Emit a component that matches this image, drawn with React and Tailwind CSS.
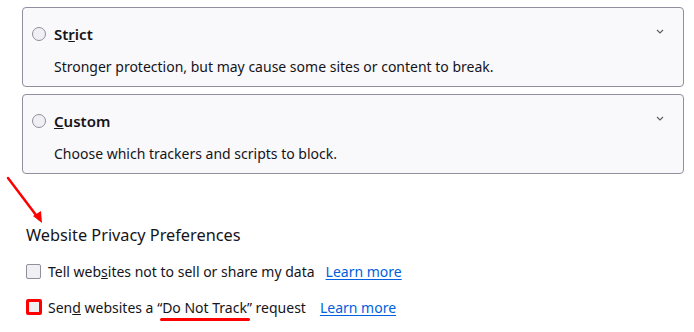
import React from 'react';

const font = { fontFamily: '"Noto Sans", "Liberation Sans", sans-serif' };

const Chevron = () => (
  <svg width="8" height="5" viewBox="0 0 8 5" className="text-[#5b5b66]">
    <path d="M1 1 L4 4 L7 1" fill="none" stroke="currentColor" strokeWidth="1.1" />
  </svg>
);

// Blocking level card (Strict / Custom)
const LevelCard = ({ title, description }) => (
  <div className="mx-[22px] w-[662px] rounded-[4px] border border-[#8f8f9d] bg-[#f9f9fb] pt-[16px] pb-[9px] pl-[9px] pr-[19px]">
    <div className="flex h-[20px] items-center">
      <span className="h-[14px] w-[14px] shrink-0 rounded-full border border-[#8f8f9d] bg-[#f0f0f4]" />
      <span className="ml-[8px] text-[15px] font-semibold text-[#15141a]">{title}</span>
      <span className="mb-[6px] ml-auto flex items-center">
        <Chevron />
      </span>
    </div>
    <p className="mt-[13px] h-[20px] pl-[22px] text-[14px] leading-[20px] text-[#15141a]">{description}</p>
  </div>
);

const LearnMore = () => (
  <a href="#" className="text-[14px] text-[#0061e0] underline underline-offset-2">
    Learn more
  </a>
);

export default function App() {
  return (
    <div className="relative h-[332px] w-[694px] overflow-hidden bg-white" style={font}>
      <div className="flex flex-col gap-[7px] pt-[7px]">
        <LevelCard
          title={<>St<u>r</u>ict</>}
          description="Stronger protection, but may cause some sites or content to break."
        />
        <LevelCard
          title={<><u>C</u>ustom</>}
          description="Choose which trackers and scripts to block."
        />
      </div>

      <div className="pl-[26px] pt-[49px]">
        <h2 className="text-[16.3px] leading-[24px] text-[#15141a]">Website Privacy Preferences</h2>

        <div className="mt-[14px] flex h-[20px] items-center">
          <span className="h-[15px] w-[15px] shrink-0 rounded-[2px] border border-[#8f8f9d] bg-[#f0f0f4]" />
          <span className="ml-[7px] text-[14px] text-[#15141a]">
            Tell web<u>s</u>ites not to sell or share my data
          </span>
          <span className="ml-[11px] flex">
            <LearnMore />
          </span>
        </div>

        <div className="mt-[16px] flex h-[20px] items-center">
          <span className="h-[16px] w-[16px] shrink-0 rounded-[2px] border-[3px] border-[#ff0000] bg-[#f0f0f4]" />
          <span className="ml-[6px] text-[14px] text-[#15141a]">
            Sen<u>d</u> websites a{' '}
            <span className="relative">
              “Do Not Track”
              <span className="absolute left-[3px] right-[2px] top-[calc(100%+1px)] h-[3px] rounded-full bg-[#ff0000]" />
            </span>{' '}
            request
          </span>
          <span className="ml-[14px] flex">
            <LearnMore />
          </span>
        </div>
      </div>

      {/* annotation arrow */}
      <svg className="absolute left-0 top-[170px]" width="60" height="60" viewBox="0 0 60 60">
        <line x1="8" y1="8" x2="39" y2="49" stroke="#ff0000" strokeWidth="2.5" strokeLinecap="round" />
        <path d="M42 53 L33 46 L41 41 Z" fill="#ff0000" />
      </svg>
    </div>
  );
}
